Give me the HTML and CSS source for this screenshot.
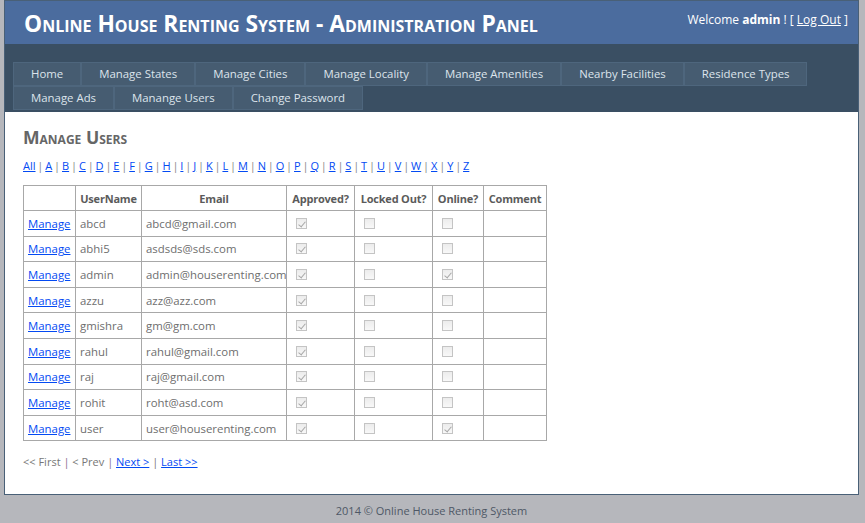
FILE: index.html
```html
<!DOCTYPE html>
<html>
<head>
<meta charset="utf-8">
<title>Manage Users</title>
<link rel="stylesheet" href="styles.css">
</head>
<body>
<div class="page">
  <div class="header">
    <h1 class="title">Online House Renting System - Administration Panel</h1>
    <div class="login">Welcome <b>admin</b> ! [ <a href="#">Log Out</a> ]</div>
  </div>
  <div class="nav">
    <ul class="menu">
      <li><a href="#">Home</a></li>
      <li><a href="#">Manage States</a></li>
      <li><a href="#">Manage Cities</a></li>
      <li><a href="#">Manage Locality</a></li>
      <li><a href="#">Manage Amenities</a></li>
      <li><a href="#">Nearby Facilities</a></li>
      <li><a href="#">Residence Types</a></li>
      <li><a href="#">Manage Ads</a></li>
      <li><a href="#">Manange Users</a></li>
      <li><a href="#">Change Password</a></li>
    </ul>
  </div>
  <div class="main">
    <h2 class="heading">Manage Users</h2>
    <div class="letters"><a href="#">All</a> | <a href="#">A</a> | <a href="#">B</a> | <a href="#">C</a> | <a href="#">D</a> | <a href="#">E</a> | <a href="#">F</a> | <a href="#">G</a> | <a href="#">H</a> | <a href="#">I</a> | <a href="#">J</a> | <a href="#">K</a> | <a href="#">L</a> | <a href="#">M</a> | <a href="#">N</a> | <a href="#">O</a> | <a href="#">P</a> | <a href="#">Q</a> | <a href="#">R</a> | <a href="#">S</a> | <a href="#">T</a> | <a href="#">U</a> | <a href="#">V</a> | <a href="#">W</a> | <a href="#">X</a> | <a href="#">Y</a> | <a href="#">Z</a></div>
    <table class="grid">
      <colgroup>
        <col class="c1"><col class="c2"><col class="c3"><col class="c4"><col class="c5"><col class="c6"><col class="c7">
      </colgroup>
      <thead>
        <tr><th></th><th>UserName</th><th>Email</th><th>Approved?</th><th>Locked Out?</th><th>Online?</th><th>Comment</th></tr>
      </thead>
      <tbody>
        <tr><td><a href="#">Manage</a></td><td>abcd</td><td>abcd@gmail.com</td><td><span class="cb on"></span></td><td><span class="cb"></span></td><td><span class="cb"></span></td><td></td></tr>
        <tr><td><a href="#">Manage</a></td><td>abhi5</td><td>asdsds@sds.com</td><td><span class="cb on"></span></td><td><span class="cb"></span></td><td><span class="cb"></span></td><td></td></tr>
        <tr><td><a href="#">Manage</a></td><td>admin</td><td>admin@houserenting.com</td><td><span class="cb on"></span></td><td><span class="cb"></span></td><td><span class="cb on"></span></td><td></td></tr>
        <tr><td><a href="#">Manage</a></td><td>azzu</td><td>azz@azz.com</td><td><span class="cb on"></span></td><td><span class="cb"></span></td><td><span class="cb"></span></td><td></td></tr>
        <tr><td><a href="#">Manage</a></td><td>gmishra</td><td>gm@gm.com</td><td><span class="cb on"></span></td><td><span class="cb"></span></td><td><span class="cb"></span></td><td></td></tr>
        <tr><td><a href="#">Manage</a></td><td>rahul</td><td>rahul@gmail.com</td><td><span class="cb on"></span></td><td><span class="cb"></span></td><td><span class="cb"></span></td><td></td></tr>
        <tr><td><a href="#">Manage</a></td><td>raj</td><td>raj@gmail.com</td><td><span class="cb on"></span></td><td><span class="cb"></span></td><td><span class="cb"></span></td><td></td></tr>
        <tr><td><a href="#">Manage</a></td><td>rohit</td><td>roht@asd.com</td><td><span class="cb on"></span></td><td><span class="cb"></span></td><td><span class="cb"></span></td><td></td></tr>
        <tr><td><a href="#">Manage</a></td><td>user</td><td>user@houserenting.com</td><td><span class="cb on"></span></td><td><span class="cb"></span></td><td><span class="cb on"></span></td><td></td></tr>
      </tbody>
    </table>
    <div class="pager">&lt;&lt; First <span class="sep">|</span> &lt; Prev <span class="sep">|</span> <a href="#">Next &gt;</a> | <a href="#">Last &gt;&gt;</a></div>
  </div>
</div>
<div class="footer">2014 © Online House Renting System</div>
</body>
</html>
```
FILE: styles.css
```css
* { box-sizing: border-box; }
html, body { margin: 0; padding: 0; }
body {
  background: #b6b7bc;
  font-family: "Open Sans", "Noto Sans", Arial, sans-serif;
  font-size: 12px;
  color: #696969;
}
a { color: #034af3; }

.page {
  width: 855px;
  margin: 0 0 0 4px;
  background: #fff;
  border: 1px solid #496077;
}

.header {
  background: #4b6c9e;
  height: 43px;
  display: flex;
  justify-content: space-between;
  align-items: flex-start;
}
.title {
  margin: 0;
  padding: 7px 0 0 19px;
  color: #fff;
  font-size: 22.8px;
  line-height: 32px;
  font-weight: bold;
  font-variant: small-caps;
  white-space: nowrap;
}
.login {
  padding: 10px 10px 0 0;
  color: #fff;
  font-size: 12px;
  line-height: 17px;
  white-space: nowrap;
}
.login a { color: #fff; }

.nav {
  background: #3a4f63;
  height: 68px;
  padding: 18px 0 0 8px;
}
.menu {
  list-style: none;
  margin: 0;
  padding: 0;
  display: flex;
  flex-wrap: wrap;
}
.menu a {
  display: block;
  background: #465c71;
  border: 1px solid #4e667d;
  color: #dde4ec;
  text-decoration: none;
  white-space: nowrap;
  padding: 0 17px;
  line-height: 22px;
  font-size: 11.4px;
}

.main {
  padding: 14px 18px 0 18px;
  height: 382px;
}
.heading {
  margin: 0;
  font-size: 17.6px;
  line-height: 22px;
  font-variant: small-caps;
  font-weight: bold;
  color: #666;
}
.letters {
  margin-top: 11px;
  font-size: 11px;
  line-height: 14px;
  word-spacing: -1px;
  color: #888;
}

.grid {
  margin-top: 12px;
  border-collapse: collapse;
  width: 523px;
  table-layout: fixed;
  font-size: 11.4px;
}
.c1 { width: 52px; }
.c2 { width: 66px; }
.c3 { width: 145px; }
.c4 { width: 68px; }
.c5 { width: 78px; }
.c6 { width: 51px; }
.c7 { width: 63px; }
.grid th, .grid td {
  border: 1px solid #a8a8a8;
  padding: 0 4px;
  height: 25.6px;
  white-space: nowrap;
  overflow: hidden;
}
.grid th {
  font-weight: bold;
  font-size: 11px;
  letter-spacing: -0.2px;
  color: #5b5b5b;
  text-align: center;
  padding: 0 2px;
  height: 25px;
}
.grid td { color: #6e6e6e; }

.cb {
  display: block;
  position: relative;
  width: 11px;
  height: 11px;
  margin-left: 5px;
  border: 1px solid #c4c4c4;
  background: linear-gradient(#ececec, #f8f8f8);
}
.cb.on::after {
  content: "";
  position: absolute;
  left: 3px;
  top: 1px;
  width: 3px;
  height: 6px;
  border-right: 1px solid #a8a8a8;
  border-bottom: 1px solid #a8a8a8;
  transform: rotate(40deg);
}

.pager {
  margin-top: 14px;
  font-size: 11px;
  line-height: 14px;
  color: #777;
}
.pager .sep { color: #8a6f8e; }

.footer {
  width: 855px;
  margin-left: 4px;
  padding-top: 8px;
  text-align: center;
  color: #4e5766;
  font-size: 11px;
  line-height: 15px;
}
```
